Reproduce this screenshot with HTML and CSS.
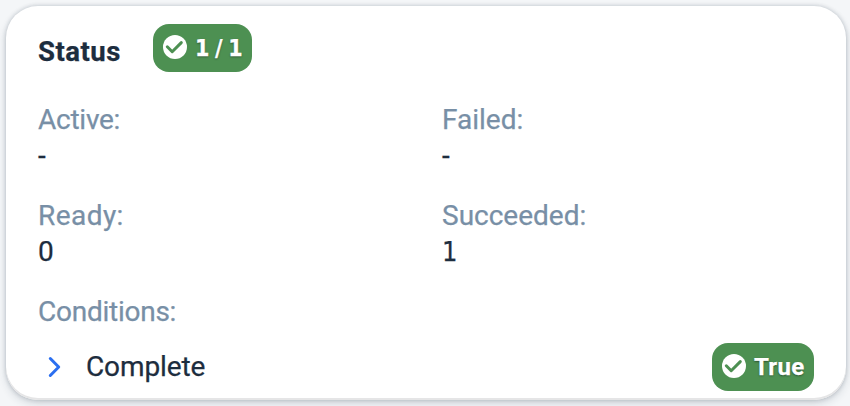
FILE: index.html
```html
<!DOCTYPE html>
<html lang="en">
<head>
<meta charset="utf-8">
<title>Status</title>
<link rel="stylesheet" href="styles.css">
</head>
<body>
<section class="card">
  <header class="header">
    <h2 class="title">Status</h2>
    <span class="badge">
      <svg class="check" viewBox="0 0 24 24"><circle cx="12" cy="12" r="12" fill="#fff"/><path d="M4.300 11.800L9.200 16.700L18.300 7.600" fill="none" stroke="#4d9052" stroke-width="3" stroke-linecap="round" stroke-linejoin="round"/></svg>
      <span class="count">1 / 1</span>
    </span>
  </header>
  <dl class="grid">
    <div class="field"><dt><span class="active">Active:</span></dt><dd>-</dd></div>
    <div class="field"><dt><span class="failed">Failed:</span></dt><dd>-</dd></div>
    <div class="field"><dt><span class="ready">Ready:</span></dt><dd>0</dd></div>
    <div class="field"><dt><span class="succeeded">Succeeded:</span></dt><dd class="footed">1</dd></div>
  </dl>
  <div class="conditions">Conditions:</div>
  <div class="row">
    <svg class="chevron" viewBox="0 0 14 22"><path d="M3.300 2.500L11.700 11L3.300 19.500" fill="none" stroke="#2b6ff0" stroke-width="3" stroke-linecap="round" stroke-linejoin="round"/></svg>
    <span class="complete">Complete</span>
    <span class="badge badge-end">
      <svg class="check" viewBox="0 0 24 24"><circle cx="12" cy="12" r="12" fill="#fff"/><path d="M4.300 11.800L9.200 16.700L18.300 7.600" fill="none" stroke="#4d9052" stroke-width="3" stroke-linecap="round" stroke-linejoin="round"/></svg>
      <span class="true">True</span>
    </span>
  </div>
</section>
</body>
</html>
```

FILE: styles.css
```css
* { box-sizing: border-box; }
body {
  margin: 0;
  height: 406px;
  padding: 6px 4px 6px 6px;
  overflow: hidden;
  background: #f4f6f8;
  color: #1d2d3e;
  font: 28px/36px Roboto, "Liberation Sans", sans-serif;
  -webkit-text-stroke: .25px currentColor;
}
.card {
  height: 394px;
  padding: 18px 32px 0;
  border-radius: 32px;
  background: #fff;
  box-shadow: inset 0 -2px 0 #e5e5e6, 0 0 4px rgba(34, 53, 72, .25), 0 4px 8px rgba(34, 53, 72, .15);
}
.header { display: flex; height: 48px; }
.title {
  width: 115px;
  margin: 0;
  padding-top: 10px;
  font-size: 27.5px;
  font-weight: 700;
  letter-spacing: .5px;
}
.badge {
  display: flex;
  align-items: center;
  gap: 8px;
  width: 99px;
  height: 48px;
  padding: 0 0 2px 10px;
  border-radius: 16px;
  background: #4d9052;
  color: #fff;
  font-size: 24px;
  font-weight: 700;
  white-space: nowrap;
  text-shadow: 0 1px 2px rgba(0, 0, 0, .45);
}
.check { width: 24px; height: 24px; flex: none; }
.count {
  padding-top: 2px;
  font-family: "DejaVu Sans Condensed", "DejaVu Sans", sans-serif;
  font-size: 23px;
  font-stretch: condensed;
  letter-spacing: -.8px;
}
.true { padding-top: 2px; letter-spacing: .3px; }
.grid {
  display: grid;
  grid-template-columns: 404px 1fr;
  row-gap: 24px;
  margin: 30px 0 0;
}
.field { height: 72px; }
dt, .conditions { color: #788fa6; }
dd { margin: 0; }
.active { letter-spacing: -.25px; }
.ready { letter-spacing: .45px; }
.footed {
  font-family: "DejaVu Sans Condensed", "DejaVu Sans", sans-serif;
  font-size: 27px;
  font-stretch: condensed;
}
.conditions { margin-top: 24px; letter-spacing: -.25px; }
.row { display: flex; align-items: center; height: 48px; margin-top: 13px; }
.chevron { width: 14px; height: 22px; margin: 0 25px 0 9px; }
.complete { letter-spacing: -.1px; }
.badge-end { width: 102px; margin-left: auto; }
```
